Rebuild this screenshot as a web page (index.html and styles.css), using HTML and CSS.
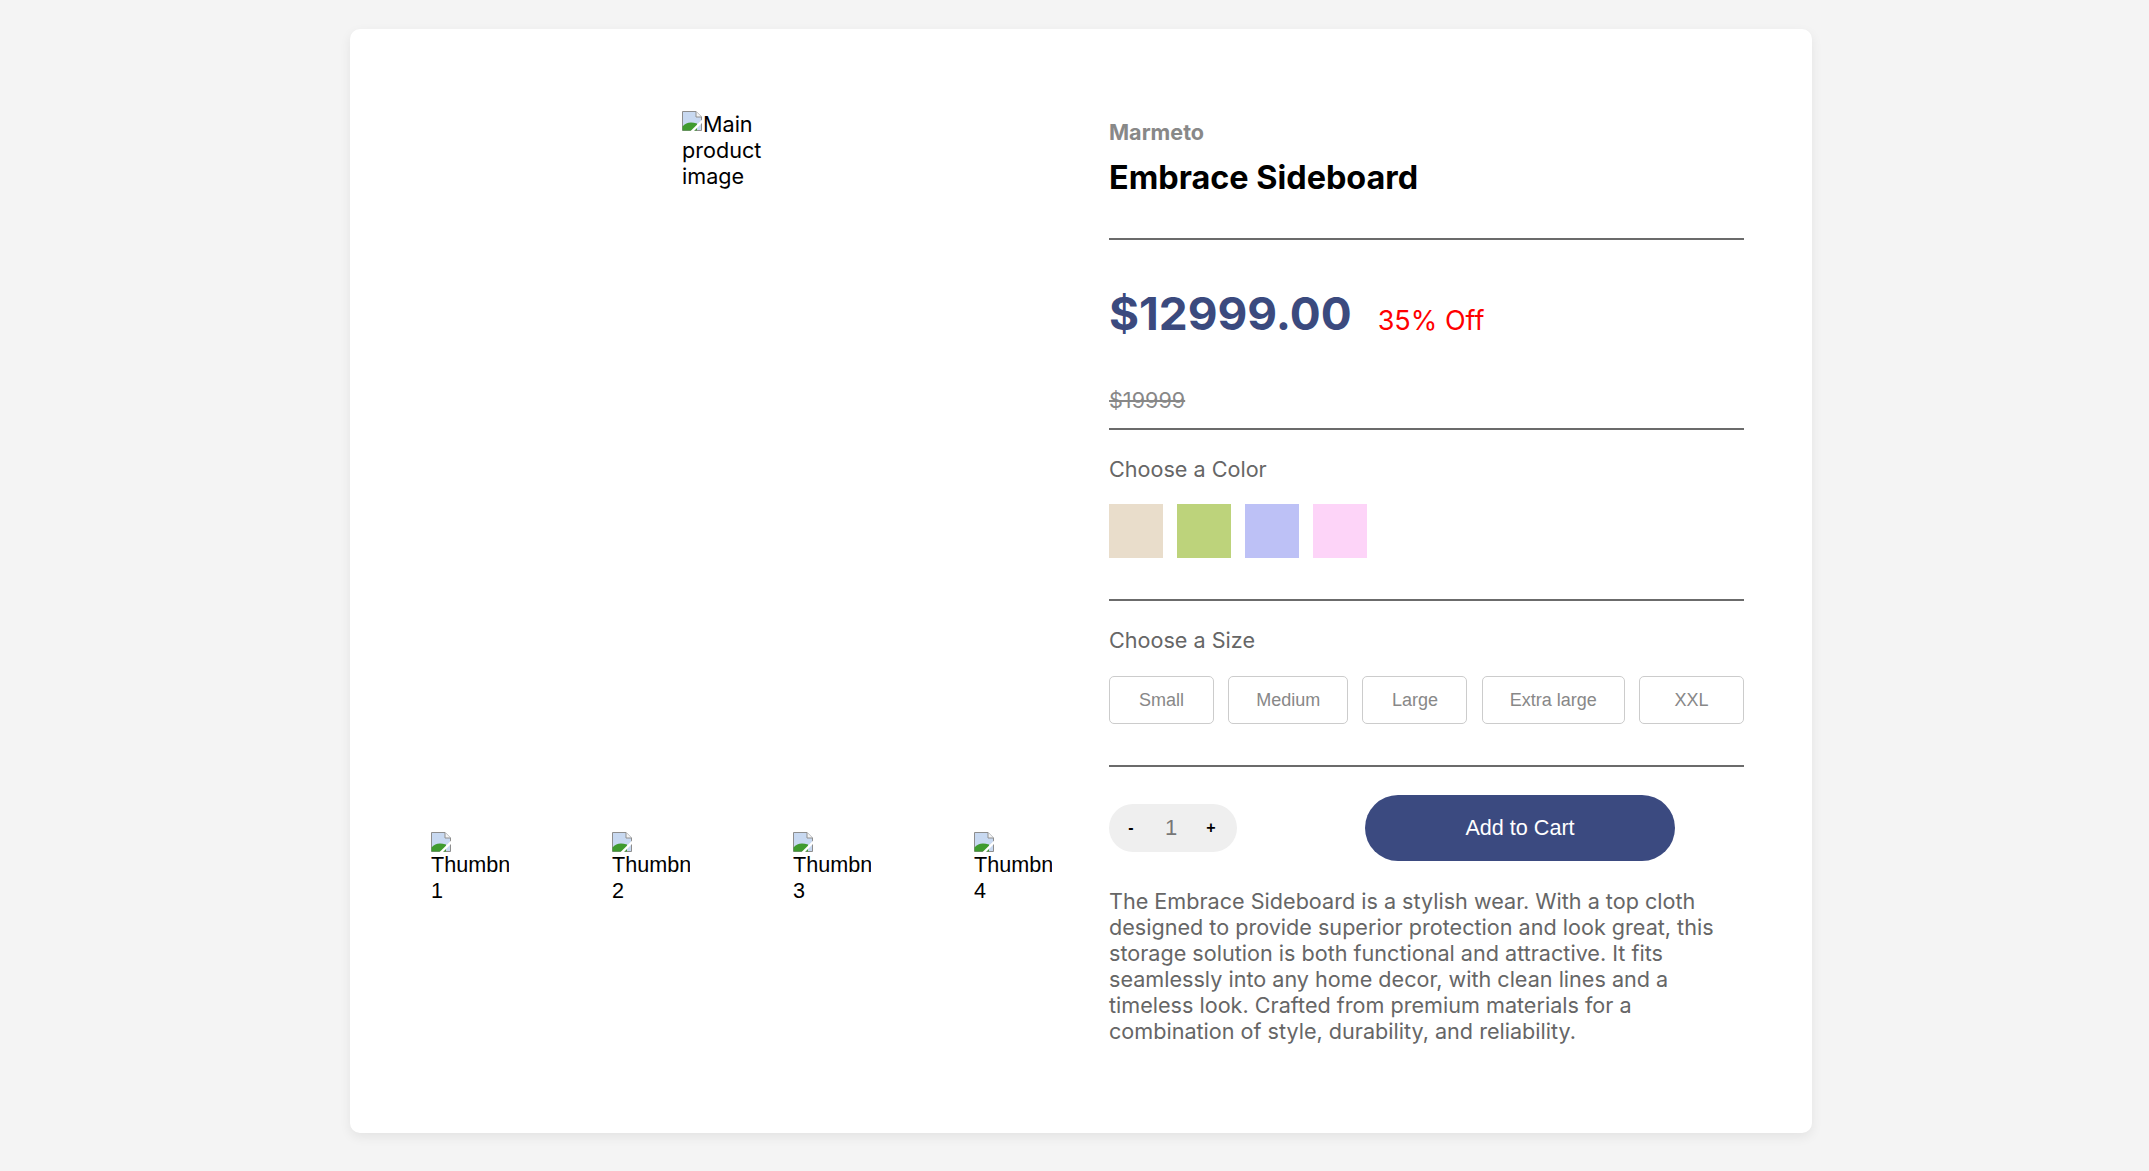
FILE: index.html
```html
<!DOCTYPE html>
<html lang="en">
<head>
<meta charset="utf-8">
<title>Embrace Sideboard</title>
<link rel="stylesheet" href="styles.css">
</head>
<body>
<main class="card">
  <section class="gallery">
    <div class="main-image">
      <div class="ph ph-main" role="img" aria-label="Main product image">
        <svg class="broken" viewBox="0 0 20 20" aria-hidden="true"><path d="M0.5 0.5H14L19.5 6V19.5H0.5Z" fill="#c8d9f1" stroke="#8e8e8e"/><path d="M14 0.5V6H19.5" fill="#f4f4f4" stroke="#8e8e8e"/><path d="M0.5 19.5V15.5C4 11 9 10.5 15 12.5V19.5Z" fill="#3f9b2f"/><path d="M9.5 20.8L20.8 9.5" stroke="#fff" stroke-width="2.4"/></svg>Main product image
      </div>
    </div>
    <div class="thumbs">
      <div class="ph ph-thumb" role="img" aria-label="Thumbnail 1"><svg class="broken" viewBox="0 0 20 20" aria-hidden="true"><path d="M0.5 0.5H14L19.5 6V19.5H0.5Z" fill="#c8d9f1" stroke="#8e8e8e"/><path d="M14 0.5V6H19.5" fill="#f4f4f4" stroke="#8e8e8e"/><path d="M0.5 19.5V15.5C4 11 9 10.5 15 12.5V19.5Z" fill="#3f9b2f"/><path d="M9.5 20.8L20.8 9.5" stroke="#fff" stroke-width="2.4"/></svg>Thumbnail 1</div>
      <div class="ph ph-thumb" role="img" aria-label="Thumbnail 2"><svg class="broken" viewBox="0 0 20 20" aria-hidden="true"><path d="M0.5 0.5H14L19.5 6V19.5H0.5Z" fill="#c8d9f1" stroke="#8e8e8e"/><path d="M14 0.5V6H19.5" fill="#f4f4f4" stroke="#8e8e8e"/><path d="M0.5 19.5V15.5C4 11 9 10.5 15 12.5V19.5Z" fill="#3f9b2f"/><path d="M9.5 20.8L20.8 9.5" stroke="#fff" stroke-width="2.4"/></svg>Thumbnail 2</div>
      <div class="ph ph-thumb" role="img" aria-label="Thumbnail 3"><svg class="broken" viewBox="0 0 20 20" aria-hidden="true"><path d="M0.5 0.5H14L19.5 6V19.5H0.5Z" fill="#c8d9f1" stroke="#8e8e8e"/><path d="M14 0.5V6H19.5" fill="#f4f4f4" stroke="#8e8e8e"/><path d="M0.5 19.5V15.5C4 11 9 10.5 15 12.5V19.5Z" fill="#3f9b2f"/><path d="M9.5 20.8L20.8 9.5" stroke="#fff" stroke-width="2.4"/></svg>Thumbnail 3</div>
      <div class="ph ph-thumb" role="img" aria-label="Thumbnail 4"><svg class="broken" viewBox="0 0 20 20" aria-hidden="true"><path d="M0.5 0.5H14L19.5 6V19.5H0.5Z" fill="#c8d9f1" stroke="#8e8e8e"/><path d="M14 0.5V6H19.5" fill="#f4f4f4" stroke="#8e8e8e"/><path d="M0.5 19.5V15.5C4 11 9 10.5 15 12.5V19.5Z" fill="#3f9b2f"/><path d="M9.5 20.8L20.8 9.5" stroke="#fff" stroke-width="2.4"/></svg>Thumbnail 4</div>
    </div>
  </section>

  <section class="details">
    <p class="brand">Marmeto</p>
    <h1 class="title">Embrace Sideboard</h1>
    <hr class="rule rule-1">
    <div class="price-row">
      <span class="price">$12999.00</span>
      <span class="off">35% Off</span>
    </div>
    <p class="old-price">$19999</p>
    <hr class="rule rule-2">
    <p class="label label-color">Choose a Color</p>
    <div class="swatches">
      <span class="swatch swatch-beige"></span>
      <span class="swatch swatch-green"></span>
      <span class="swatch swatch-lavender"></span>
      <span class="swatch swatch-pink"></span>
    </div>
    <hr class="rule rule-3">
    <p class="label label-size">Choose a Size</p>
    <div class="sizes">
      <button class="size-btn">Small</button>
      <button class="size-btn">Medium</button>
      <button class="size-btn">Large</button>
      <button class="size-btn">Extra large</button>
      <button class="size-btn">XXL</button>
    </div>
    <hr class="rule rule-4">
    <div class="buy-row">
      <div class="qty">
        <button class="qty-btn">-</button>
        <span class="qty-val">1</span>
        <button class="qty-btn">+</button>
      </div>
      <button class="add-btn">Add to Cart</button>
    </div>
    <p class="desc">The Embrace Sideboard is a stylish wear. With a top cloth designed to provide superior protection and look great, this storage solution is both functional and attractive. It fits seamlessly into any home decor, with clean lines and a timeless look. Crafted from premium materials for a combination of style, durability, and reliability.</p>
  </section>
</main>
</body>
</html>
```

FILE: styles.css
```css
* { box-sizing: border-box; }

html, body {
  margin: 0;
  padding: 0;
  background: #f4f4f4;
}

body {
  font-family: Inter, "Noto Sans", sans-serif;
  font-size: 21.6px;
  color: #000;
  padding-top: 29px;
  padding-left: 350px;
  height: 1171px;
}

.card {
  width: 1462px;
  background: #fff;
  border-radius: 10px;
  box-shadow: 0 4px 12px rgba(0, 0, 0, 0.07);
  padding: 82px 68px 89px 68px;
  display: grid;
  grid-template-columns: 635px 635px;
  column-gap: 56px;
}

/* gallery */
.gallery {
  display: flex;
  flex-direction: column;
}

.main-image {
  height: 721px;
  display: flex;
  justify-content: center;
  align-items: flex-start;
}

.ph {
  overflow: hidden;
  color: #000;
}

.broken {
  float: left;
  width: 20px;
  height: 20px;
  margin-right: 1px;
}

.ph-main {
  width: 107px;
  font-family: Inter, sans-serif;
  font-size: 21.6px;
  line-height: 26px;
}

.thumbs {
  display: flex;
  gap: 103px;
  padding-left: 13px;
}

.ph-thumb {
  width: 78px;
  height: 80px;
  font-family: "Liberation Sans", Arial, sans-serif;
  font-size: 21.6px;
  line-height: 26px;
}

/* details */
.details {
  padding-top: 8px;
  display: flex;
  flex-direction: column;
}

.details p, .details h1 { margin: 0; }

.brand {
  font-weight: 700;
  color: #888;
  line-height: 26px;
}

.title {
  margin-top: 13px !important;
  font-size: 32.4px;
  font-weight: 700;
  line-height: 39px;
  color: #000;
}

.rule {
  border: none;
  height: 2px;
  background: #6b6b6b;
  margin: 0;
  width: 100%;
}

.rule-1 { margin-top: 41px; }
.rule-2 { margin-top: 15px; }
.rule-3 { margin-top: 41px; }
.rule-4 { margin-top: 41px; }

.price-row {
  margin-top: 46px;
  display: flex;
  align-items: baseline;
  gap: 26px;
}

.price {
  font-size: 45.9px;
  line-height: 56px;
  font-weight: 700;
  color: #3b4a7e;
}

.off {
  font-size: 27px;
  color: #ff0000;
}

.old-price {
  margin-top: 45px !important;
  line-height: 26px;
  color: #888;
  text-decoration: line-through;
}

.label {
  line-height: 26px;
  color: #666;
}

.label-color { margin-top: 26px !important; }
.label-size { margin-top: 26px !important; }

.swatches {
  margin-top: 22px;
  display: flex;
  gap: 14px;
}

.swatch {
  width: 54px;
  height: 54px;
  display: block;
}

.swatch-beige { background: #e9ddcb; }
.swatch-green { background: #bdd37b; }
.swatch-lavender { background: #bdc1f6; }
.swatch-pink { background: #fdd4f8; }

.sizes {
  margin-top: 23px;
  display: flex;
  justify-content: space-between;
}

.size-btn {
  height: 48px;
  min-width: 105px;
  padding: 0 27px;
  background: #fff;
  border: 1px solid #cccccc;
  border-radius: 5px;
  font-family: "Liberation Sans", Arial, sans-serif;
  font-size: 18px;
  color: #888;
}

.buy-row {
  margin-top: 28px;
  display: flex;
  align-items: center;
  gap: 128px;
}

.qty {
  width: 128px;
  height: 48px;
  border-radius: 24px;
  background: #efefef;
  display: grid;
  grid-template-columns: 40px 40px 40px;
  padding: 0 6px 0 2px;
  align-items: center;
}

.qty-btn {
  background: none;
  border: none;
  padding: 0;
  font-family: "Liberation Sans", Arial, sans-serif;
  font-size: 16px;
  font-weight: 700;
  color: #000;
  text-align: center;
}

.qty-val {
  text-align: center;
  font-family: "Liberation Sans", Arial, sans-serif;
  font-size: 22px;
  color: #777;
}

.add-btn {
  width: 310px;
  height: 66px;
  border: none;
  border-radius: 33px;
  background: #3b4a80;
  color: #fff;
  font-family: "Liberation Sans", Arial, sans-serif;
  font-size: 21.6px;
}

.desc {
  margin-top: 27px !important;
  line-height: 26px;
  color: #666;
}
```
